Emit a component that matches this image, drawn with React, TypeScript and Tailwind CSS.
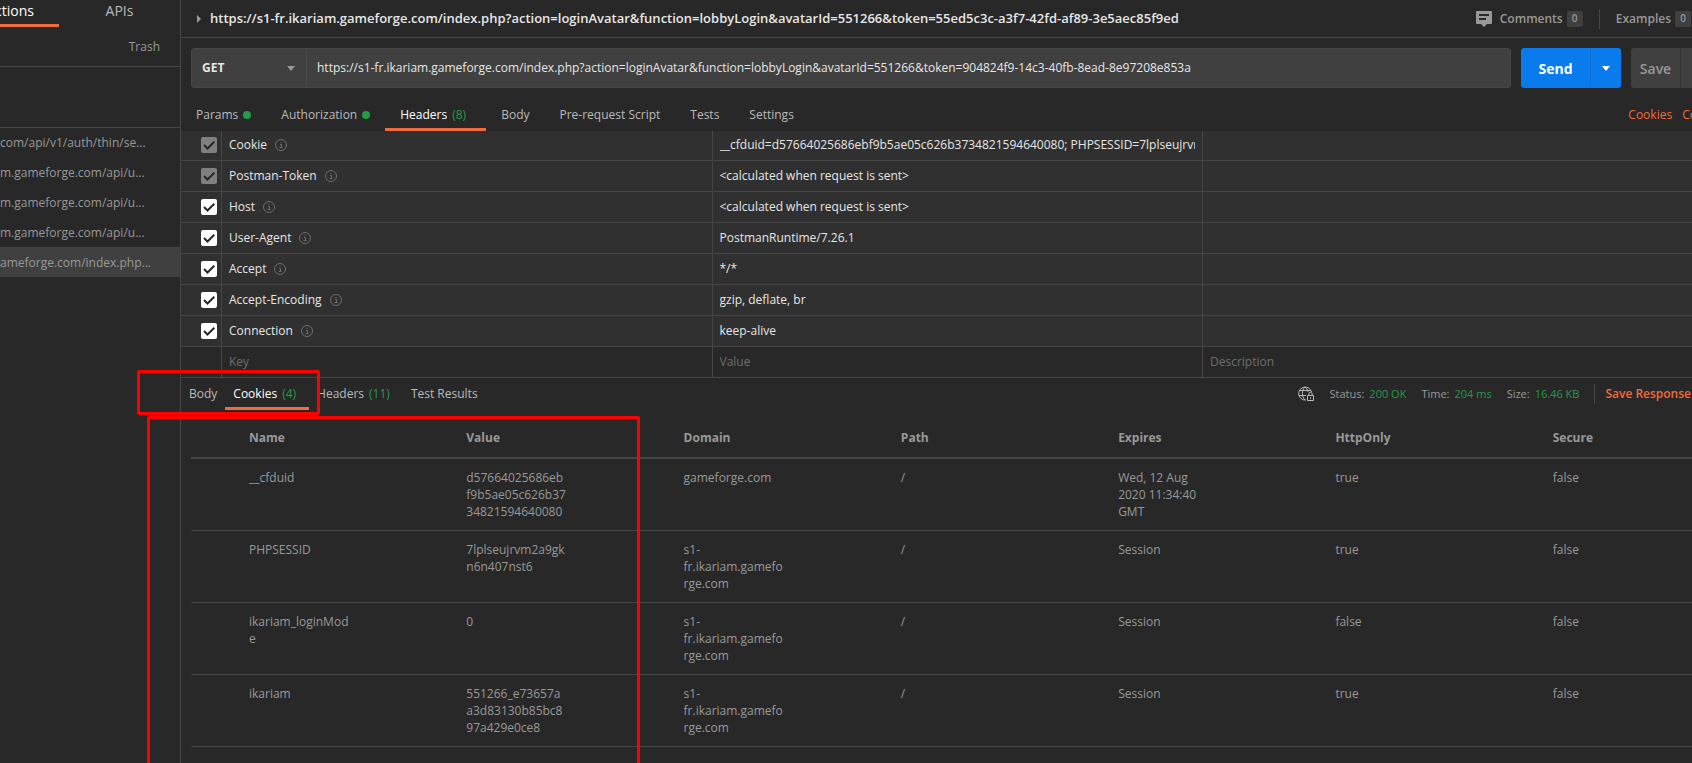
import { useState } from 'react';
import clsx from 'clsx';

const requestTabs = [
  { label: 'Params', dot: true },
  { label: 'Authorization', dot: true },
  { label: 'Headers', count: 8 },
  { label: 'Body' },
  { label: 'Pre-request Script' },
  { label: 'Tests' },
  { label: 'Settings' },
];

const responseTabs = [
  { label: 'Body' },
  { label: 'Cookies', count: 4 },
  { label: 'Headers', count: 11 },
  { label: 'Test Results' },
];

const historyItems = [
  'com/api/v1/auth/thin/se...',
  'm.gameforge.com/api/u...',
  'm.gameforge.com/api/u...',
  'm.gameforge.com/api/u...',
  'ameforge.com/index.php...',
];

// locked headers are generated from the cookie jar and can't be unticked
const headerRows = [
  { name: 'Cookie', value: '__cfduid=d57664025686ebf9b5ae05c626b3734821594640080; PHPSESSID=7lplseujrvm2a9gkn6n407nst6', locked: true },
  { name: 'Postman-Token', value: '<calculated when request is sent>', locked: true },
  { name: 'Host', value: '<calculated when request is sent>' },
  { name: 'User-Agent', value: 'PostmanRuntime/7.26.1' },
  { name: 'Accept', value: '*/*' },
  { name: 'Accept-Encoding', value: 'gzip, deflate, br' },
  { name: 'Connection', value: 'keep-alive' },
];

const cookieColumns = ['Name', 'Value', 'Domain', 'Path', 'Expires', 'HttpOnly', 'Secure'];

// the year is kept on one line with the time
const cookieRows = [
  ['__cfduid', 'd57664025686ebf9b5ae05c626b3734821594640080', 'gameforge.com', '/', 'Wed, 12 Aug 2020\u00a011:34:40 GMT', 'true', 'false'],
  ['PHPSESSID', '7lplseujrvm2a9gkn6n407nst6', 's1-fr.ikariam.gameforge.com', '/', 'Session', 'true', 'false'],
  ['ikariam_loginMode', '0', 's1-fr.ikariam.gameforge.com', '/', 'Session', 'false', 'false'],
  ['ikariam', '551266_e73657aa3d83130b85bc897a429e0ce8', 's1-fr.ikariam.gameforge.com', '/', 'Session', 'true', 'false'],
];

function Caret({ className }: { className?: string }) {
  return (
    <svg viewBox="0 0 8 5" className={clsx('h-[5px] w-2 shrink-0', className)} fill="currentColor" aria-hidden="true">
      <path d="M0 0h8L4 5z" />
    </svg>
  );
}

function InfoIcon() {
  return (
    <svg viewBox="0 0 12 12" className="size-3 shrink-0 text-[#6e6e6e]" fill="none" stroke="currentColor" aria-hidden="true">
      <circle cx="6" cy="6" r="5.5" />
      <path d="M5 5.5h1.5v3M4.5 8.5h3M5.5 3.5h1" />
    </svg>
  );
}

function CommentIcon() {
  return (
    <svg viewBox="0 0 16 16" className="size-4 shrink-0" aria-hidden="true">
      <path d="M1 0h14a1 1 0 0 1 1 1v11a1 1 0 0 1-1 1h-4l-3 3-3-3H1a1 1 0 0 1-1-1V1a1 1 0 0 1 1-1z" fill="#999" />
      <path d="M3 4h10M3 8h7" stroke="#282828" strokeWidth="2" />
    </svg>
  );
}

function GlobeLockIcon() {
  return (
    <svg viewBox="0 0 16 16" className="size-4 shrink-0 text-[#bababa]" fill="none" stroke="currentColor" aria-hidden="true">
      <path d="M8 14A6.500 6.500 0 1 1 13.500 6" />
      <path d="M7 1C3.500 4.500 3.500 10.500 7 14M7 1c1.700 1.400 2.700 3 3 5M1.300 4.500h11.400M.8 9.500h7.200" />
      <path d="M9.500 9.500h6v5h-6zM10.800 9.500V8a1.700 1.700 0 0 1 3.400 0v1.500M12.500 11.200v1.600" />
    </svg>
  );
}

function CountBadge({ value }: { value: number }) {
  return <span className="flex size-4 items-center justify-center rounded-xs bg-[#404040] text-[10px]">{value}</span>;
}

function HeaderCheckbox({ name, locked }: { name: string; locked?: boolean }) {
  return (
    <label className="relative ml-5 block size-4">
      <input
        type="checkbox"
        defaultChecked
        disabled={locked}
        aria-label={`Send ${name}`}
        className="peer block size-4 appearance-none rounded-xs bg-white disabled:bg-[#808080]"
      />
      <svg viewBox="0 0 16 16" className="pointer-events-none absolute inset-0 hidden size-4 peer-checked:block" fill="none" stroke="#282828" strokeWidth="2" aria-hidden="true">
        <path d="M3 8l3.500 3.500L13.300 4.700" />
      </svg>
    </label>
  );
}

function Sidebar() {
  return (
    <aside className="flex w-[181px] shrink-0 flex-col overflow-hidden border-r border-[#464646]">
      <nav className="flex h-[27px] text-[14px]">
        <button className="flex w-[59px] items-center justify-end border-b-3 border-[#f26b3a] pr-[25px] pb-1 text-white">ctions</button>
        <button className="flex-1 border-b-3 border-transparent pb-1 text-[#bababa]">APIs</button>
      </nav>
      <div className="flex h-10 items-center justify-end border-b border-[#464646] pr-5">
        <button className="text-[12px] text-[#999]">Trash</button>
      </div>
      <div className="h-[61px] border-b border-[#464646]" />
      <ul className="-mt-px text-[12px] text-[#999]">
        {historyItems.map((item, i) => (
          <li key={i} className={clsx('flex h-[30px] items-center pt-0.5 whitespace-nowrap', i === 4 && 'bg-[#404040]')}>
            <a href="#">{item}</a>
          </li>
        ))}
      </ul>
    </aside>
  );
}

function RequestBar() {
  return (
    <form className="flex h-10 gap-[10px] px-[10px]" onSubmit={(e) => e.preventDefault()}>
      <div className="flex min-w-0 flex-1 rounded-[3px] border border-[#464646] bg-[#404040]">
        <div className="relative w-[115px] border-r border-[#4a4a4a]">
          <select aria-label="Method" className="size-full appearance-none pl-[10px] text-[12px] font-bold text-[#e6e6e6]">
            <option>GET</option>
            <option>POST</option>
          </select>
          <Caret className="pointer-events-none absolute top-[17px] right-[11px] text-[#999]" />
        </div>
        <input
          aria-label="Request URL"
          defaultValue="https://s1-fr.ikariam.gameforge.com/index.php?action=loginAvatar&function=lobbyLogin&avatarId=551266&token=904824f9-14c3-40fb-8ead-8e97208e853a"
          className="min-w-0 flex-1 px-[10px] text-[12px] font-medium text-[#e6e6e6] outline-none"
        />
      </div>
      <div className="flex w-[100px] rounded-[3px] bg-[#097bed] text-white">
        <button className="flex-1 text-[14px] font-bold">Send</button>
        <button aria-label="Send options" className="flex w-[31px] items-center justify-center border-l border-[#0a70d6]">
          <Caret />
        </button>
      </div>
      <div className="flex w-[79px] rounded-[3px] bg-[#404040] text-[#999]">
        <button className="flex-1 text-[14px] font-semibold">Save</button>
        <button aria-label="Save options" className="flex w-[30px] items-center justify-center border-l border-[#363636]">
          <Caret />
        </button>
      </div>
    </form>
  );
}

function HeadersTable() {
  return (
    <div className="overflow-hidden">
      <table className="-mt-px w-full table-fixed border-separate border-spacing-0 text-left text-[12px] font-medium text-[#e6e6e6]">
        <colgroup>
          <col className="w-[41px]" />
          <col />
          <col />
          <col className="w-[517px]" />
        </colgroup>
        <tbody>
          {headerRows.map((row) => (
            <tr key={row.name} className="h-[31px] bg-[#303030]">
              <td className="border-r border-b border-[#464646]"><HeaderCheckbox name={row.name} locked={row.locked} /></td>
              <td className="border-r border-b border-[#464646] px-[7px]">
                <span className="flex items-center gap-2">
                  {row.name}
                  <InfoIcon />
                </span>
              </td>
              <td className="border-r border-b border-[#464646] px-[7px]">
                <div className="overflow-hidden whitespace-nowrap">{row.value}</div>
              </td>
              <td className="border-b border-[#464646]" />
            </tr>
          ))}
          <tr className="h-[31px] font-normal">
            <td className="border-r border-b border-[#464646]" />
            {['Key', 'Value', 'Description'].map((field) => (
              <td key={field} className="border-r border-b border-[#464646] px-[7px]">
                <input aria-label={field} placeholder={field} className="block w-full outline-none placeholder:text-[#6e6e6e]" />
              </td>
            ))}
          </tr>
        </tbody>
      </table>
    </div>
  );
}

function CookiesTable() {
  return (
    <div className="pt-2 pr-2 pl-[10px]">
      <table className="w-full table-fixed border-collapse text-left text-[12px] leading-[17px] text-[#999]">
        <thead>
          <tr className="h-10 border-b-2 border-[#464646]">
            {cookieColumns.map((c) => (
              <th key={c} className="pr-[59px] pl-[58px] font-bold">{c}</th>
            ))}
          </tr>
        </thead>
        <tbody>
          {cookieRows.map((row) => (
            <tr key={row[0]} className="h-[72px] border-b border-[#464646] align-top">
              {row.map((cell, i) => (
                <td key={i} className="py-[10px] pr-[59px] pl-[58px] wrap-break-word">{cell}</td>
              ))}
            </tr>
          ))}
        </tbody>
      </table>
    </div>
  );
}

export default function App() {
  const [requestTab, setRequestTab] = useState('Headers');
  const [responseTab, setResponseTab] = useState('Cookies');

  return (
    <div className="relative flex h-screen overflow-hidden bg-[#282828] font-['Open_Sans',sans-serif]">
      <Sidebar />
      <main className="-mr-7 flex min-w-0 flex-1 flex-col">
        <header className="flex h-[38px] shrink-0 items-center border-b border-[#464646] pr-[29px] pl-4 text-[12px] font-semibold text-[#999]">
          <button aria-label="Expand description" className="mr-[9px]">
            <svg viewBox="0 0 4 8" className="h-2 w-1" fill="#999" aria-hidden="true"><path d="M0 0l4 4-4 4z" /></svg>
          </button>
          <h1 className="min-w-0 flex-1 truncate text-[13px] font-semibold text-[#e6e6e6]">
            https://s1-fr.ikariam.gameforge.com/index.php?action=loginAvatar&amp;function=lobbyLogin&amp;avatarId=551266&amp;token=55ed5c3c-a3f7-42fd-af89-3e5aec85f9ed
          </h1>
          <button className="flex items-center">
            <CommentIcon />
            <span className="mr-1 ml-2">Comments</span>
            <CountBadge value={0} />
          </button>
          <span className="mx-4 h-5 w-px bg-[#464646]" />
          <button className="flex items-center gap-1">
            Examples
            <CountBadge value={0} />
          </button>
        </header>

        <div className="pt-[10px]">
          <RequestBar />
        </div>

        <div className="flex items-end justify-between pr-[9px] text-[12px]">
          <nav className="flex">
            {requestTabs.map((tab) => (
              <button
                key={tab.label}
                onClick={() => setRequestTab(tab.label)}
                className={clsx(
                  'flex h-[43px] items-center border-b-3 px-[15px] pt-[13px]',
                  requestTab === tab.label ? 'border-[#f26b3a] font-medium text-white' : 'border-transparent text-[#bababa]',
                )}
              >
                {tab.label}
                {tab.dot && <span className="ml-[5px] size-2 rounded-full bg-[#249c47]" />}
                {tab.count && <span className="mx-[5px] font-normal text-[#249c47]">({tab.count})</span>}
              </button>
            ))}
          </nav>
          <div className="flex h-[43px] items-center gap-[10px] pt-[10px] text-[#f26b3a]">
            <a href="#">Cookies</a>
            <a href="#">Code</a>
          </div>
        </div>

        <HeadersTable />

        <div className="flex h-8 shrink-0 items-center justify-between pr-[10px] text-[12px]">
          <nav className="flex h-8">
            {responseTabs.map((tab) => (
              <button
                key={tab.label}
                onClick={() => setResponseTab(tab.label)}
                className={clsx(
                  'flex items-center border-b-3 px-2 pt-[3px]',
                  responseTab === tab.label ? 'border-[#f26b3a] font-medium text-white' : 'border-transparent text-[#bababa]',
                )}
              >
                {tab.label}
                {tab.count && <span className="mx-[5px] font-normal text-[#249c47]">({tab.count})</span>}
              </button>
            ))}
          </nav>
          <div className="flex items-center text-[#999]">
            <GlobeLockIcon />
            <dl className="ml-[15px] flex gap-[15px] text-[11px]">
              <div className="flex gap-[5px]"><dt>Status:</dt><dd className="text-[#249c47]">200 OK</dd></div>
              <div className="flex gap-[5px]"><dt>Time:</dt><dd className="text-[#249c47]">204 ms</dd></div>
              <div className="flex gap-[5px]"><dt>Size:</dt><dd className="text-[#249c47]">16.46 KB</dd></div>
            </dl>
            <span className="mr-[10px] ml-[15px] h-5 w-px bg-[#464646]" />
            <button className="flex items-center gap-[11px] font-semibold text-[#f26b3a]">
              Save Response
              <Caret />
            </button>
          </div>
        </div>

        <CookiesTable />
      </main>

      {/* red marker frames round the Cookies tab and its first columns */}
      <div className="pointer-events-none absolute top-[370px] left-[137px] h-[45px] w-[183px] rounded-xs border-3 border-[#ff0000]" />
      <div className="pointer-events-none absolute top-[416px] -bottom-1 left-[147px] w-[493px] rounded-xs border-3 border-[#ff0000]" />
    </div>
  );
}
